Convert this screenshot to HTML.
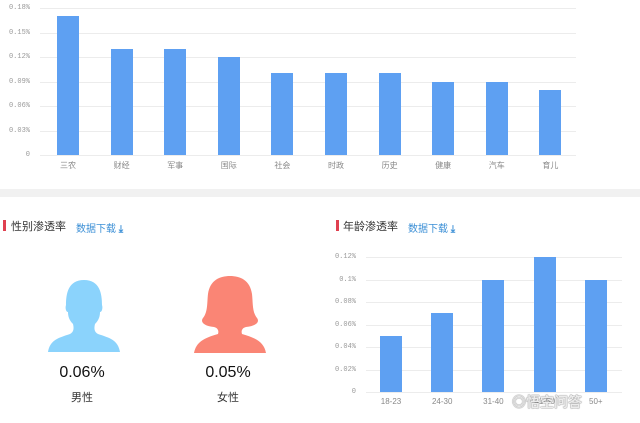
<!DOCTYPE html>
<html><head><meta charset="utf-8"><style>
body{margin:0;width:640px;height:423px;background:#fff;overflow:hidden;position:relative;font-family:"Liberation Sans","Noto Sans CJK SC",sans-serif}
.a{position:absolute}
.yl{position:absolute;font-size:7px;color:#999;text-align:right;width:30px;font-family:"Liberation Mono","Noto Sans CJK SC",monospace}
.g{position:absolute;height:1px;background:#ececec}
.b{position:absolute;background:#5ea0f2}
.xl{position:absolute;font-size:8px;color:#888;width:40px;text-align:center}
.t{position:absolute;font-size:11px;color:#333}
.d{position:absolute;font-size:10px;color:#3b8fd6}
.r{position:absolute;width:3px;height:11px;background:#e04050}
</style></head><body>
<div id="top"></div>
<div class="a" style="left:0;top:189px;width:640px;height:8px;background:#f1f1f1"></div>
<div class="r" style="left:3px;top:220px"></div><div class="t" style="left:11px;top:218px">性别渗透率</div><div class="d" style="left:76px;top:220px">数据下载 <b>⤓</b></div>
<div class="r" style="left:336px;top:220px"></div><div class="t" style="left:343px;top:218px">年龄渗透率</div><div class="d" style="left:408px;top:220px">数据下载 <b>⤓</b></div>
<svg class="a" style="left:44px;top:276px" width="80" height="80" viewBox="0 0 80 80"><path fill="#8bd3fc" d="M4 76 C6 64 14 62 26 58 C30 56 30 52 29 48 C25 44 24 40 24 36 C22 36 21 32 22 29 C22 18 24 4 40 4 C56 4 58 18 58 29 C59 32 58 36 56 36 C56 40 55 44 51 48 C50 52 50 56 54 58 C66 62 74 64 76 76Z"/></svg>
<svg class="a" style="left:190px;top:274px" width="80" height="82" viewBox="0 0 80 82"><path fill="#fa8575" d="M4 79 C6 68 14 64 28 60 C29 57 28 54 24 53 C14 52 10 48 13 44 C18 38 17 28 18 20 C20 6 30 2 40 2 C50 2 60 6 62 20 C63 28 62 38 67 44 C70 48 66 52 56 53 C52 54 51 57 52 60 C66 64 74 68 76 79Z"/></svg>
<div class="a" style="left:42px;top:364px;width:80px;text-align:center;font-size:16px;color:#111">0.06%</div>
<div class="a" style="left:188px;top:364px;width:80px;text-align:center;font-size:16px;color:#111">0.05%</div>
<div class="a" style="left:62px;top:389px;width:40px;text-align:center;font-size:11px;color:#333">男性</div>
<div class="a" style="left:208px;top:389px;width:40px;text-align:center;font-size:11px;color:#333">女性</div>
<div id="br"></div>
<div class="a" style="left:512px;top:392px;font-size:14px;color:rgba(255,255,255,.85);font-weight:bold;text-shadow:0 0 1px #777,0 0 1px #777">◎悟空问答</div>
<script>
var h='';
var yl=['0.18%','0.15%','0.12%','0.09%','0.06%','0.03%','0'];
for(var i=0;i<7;i++){var y=8+i*24.5;h+='<div class="yl" style="left:0;top:'+(y-4)+'px">'+yl[i]+'</div><div class="g" style="left:40px;top:'+y+'px;width:536px"></div>';}
var v=[17,13,13,12,10,10,10,9,9,8],n=['三农','财经','军事','国际','社会','时政','历史','健康','汽车','育儿'];
for(i=0;i<10;i++){var x=57+i*53.6,t=155-v[i]*24.5/3;h+='<div class="b" style="left:'+x+'px;top:'+t+'px;width:22px;height:'+(155-t)+'px"></div><div class="xl" style="left:'+(x-9)+'px;top:160px">'+n[i]+'</div>';}
document.getElementById('top').innerHTML=h;
h='';var y2=['0.12%','0.1%','0.08%','0.06%','0.04%','0.02%','0'];
for(i=0;i<7;i++){var y=257+i*22.5;h+='<div class="yl" style="left:326px;top:'+(y-4)+'px">'+y2[i]+'</div><div class="g" style="left:366px;top:'+y+'px;width:256px"></div>';}
var v2=[5,7,10,12,10],n2=['18-23','24-30','31-40','41-50','50+'];
for(i=0;i<5;i++){var x=380+i*51.2,t=392-v2[i]*11.25;h+='<div class="b" style="left:'+x+'px;top:'+t+'px;width:22px;height:'+(392-t)+'px"></div><div class="xl" style="left:'+(x-9)+'px;top:397px">'+n2[i]+'</div>';}
document.getElementById('br').innerHTML=h;
</script>
</body></html>
